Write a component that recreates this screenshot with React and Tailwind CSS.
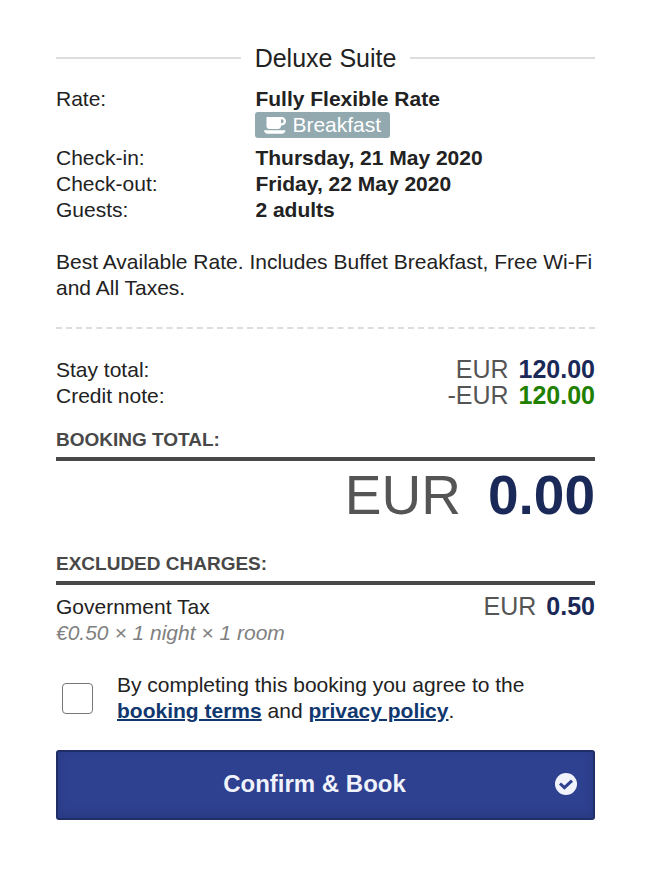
import React, { useState } from 'react';

const stay = [
  { label: 'Check-in:', value: 'Thursday, 21 May 2020' },
  { label: 'Check-out:', value: 'Friday, 22 May 2020' },
  { label: 'Guests:', value: '2 adults' },
];

const CupIcon = () => (
  <svg viewBox="0 0 22 17" className="h-[17px] w-[22px]" fill="currentColor" aria-hidden="true">
    {/* cup with handle */}
    <path
      fillRule="evenodd"
      d="M2.5 0H17.5C20 0 22 1.9 22 4.3S20 8.6 17.5 8.6H17V9C17 10.7 15.7 12 14 12H5.5C3.8 12 2.5 10.7 2.5 9ZM17 2.3V6.3H17.5C18.7 6.3 19.6 5.4 19.6 4.3S18.7 2.3 17.5 2.3Z"
    />
    {/* saucer */}
    <path d="M0 13.3H21.5C21.5 15.2 19.8 16.7 17.8 16.7H3.7C1.7 16.7 0 15.2 0 13.3Z" />
  </svg>
);

const CheckIcon = () => (
  <svg viewBox="0 0 22 22" className="size-[22px]" aria-hidden="true">
    <circle cx="11" cy="11" r="11" fill="currentColor" />
    <path d="M5 10.5L9.4 14.7L17 7.6" fill="none" stroke="#2e4090" strokeWidth="3" />
  </svg>
);

const Row = ({ label, children }) => (
  <div className="flex">
    <dt className="w-[37%] shrink-0">{label}</dt>
    <dd className="font-bold">{children}</dd>
  </div>
);

const Price = ({ amount, negative, credit }) => (
  <span className="flex gap-2.5 text-[25px] leading-6 text-[#555555]">
    <span>{negative ? '-EUR' : 'EUR'}</span>
    <b className={credit ? 'text-[#218000]' : 'text-[#1a2957]'}>{amount}</b>
  </span>
);

const SectionTitle = ({ children }) => (
  <h2 className="border-b-4 border-[#484848] pb-1 text-[19px] font-bold uppercase leading-[26px] text-[#484848]">
    {children}
  </h2>
);

const App = () => {
  const [agreed, setAgreed] = useState(false);

  return (
    <main className="bg-white pt-11 pb-14 pl-14 pr-[65px] font-['Liberation_Sans',Arial,sans-serif] text-[21px] leading-[26px] text-[#222222]">
      <div className="flex items-center gap-3.5">
        <span className="h-0.5 flex-1 bg-[#dddddd]" />
        <h1 className="text-[25px] leading-7">Deluxe Suite</h1>
        <span className="h-0.5 flex-1 bg-[#dddddd]" />
      </div>

      <dl className="mt-3.5">
        <Row label="Rate:">
          Fully Flexible Rate
          <span className="mb-[7px] flex h-[26px] w-fit items-center gap-1.5 rounded-[3px] bg-[#92a9af] px-[9px] font-normal text-white">
            <CupIcon />
            Breakfast
          </span>
        </Row>
        {stay.map((item) => (
          <Row key={item.label} label={item.label}>
            {item.value}
          </Row>
        ))}
      </dl>

      <p className="mt-[26px]">
        Best Available Rate. Includes Buffet Breakfast, Free Wi-Fi and All Taxes.
      </p>

      <hr className="mt-[26px] border-t-2 border-dashed border-[#dddddd]" />

      <dl className="mt-7">
        <div className="flex justify-between">
          <dt>Stay total:</dt>
          <dd><Price amount="120.00" /></dd>
        </div>
        <div className="flex justify-between">
          <dt>Credit note:</dt>
          <dd><Price amount="120.00" negative credit /></dd>
        </div>
      </dl>

      <section className="mt-[18px]">
        <SectionTitle>Booking total:</SectionTitle>
        <p className="mt-0.5 flex justify-end gap-[27px] text-[55px] leading-[64px] text-[#555555]">
          <span>EUR</span>
          <b className="text-[#1a2957]">0.00</b>
        </p>
      </section>

      <section className="mt-6">
        <SectionTitle>Excluded charges:</SectionTitle>
        <div className="mt-[9px] flex justify-between">
          <div>
            <p>Government Tax</p>
            <p className="italic text-[#808080]">€0.50 × 1 night × 1 room</p>
          </div>
          <Price amount="0.50" />
        </div>
      </section>

      <div className="mt-[26px] flex items-center gap-6 pl-1.5">
        <input
          id="agree"
          type="checkbox"
          checked={agreed}
          onChange={(e) => setAgreed(e.target.checked)}
          className="size-[31px] shrink-0 appearance-none rounded-[4px] border border-[#767676] bg-white checked:bg-[#2e4090]"
        />
        <label htmlFor="agree">
          By completing this booking you agree to the{' '}
          <a href="#terms" className="font-bold text-[#11386e] underline decoration-2">booking terms</a> and{' '}
          <a href="#privacy" className="font-bold text-[#11386e] underline decoration-2">privacy policy</a>.
        </label>
      </div>

      <button
        type="button"
        className="mt-[26px] flex h-[70px] w-full items-center rounded-[3px] border-2 border-[#202e67] bg-[#2e4090] px-4 pb-0.5 text-2xl font-bold text-[#f0f3fb] shadow-[inset_0_-4px_12px_rgba(0,0,0,0.1)]"
      >
        <span className="flex-1">Confirm &amp; Book</span>
        <CheckIcon />
      </button>
    </main>
  );
};

export default App;
